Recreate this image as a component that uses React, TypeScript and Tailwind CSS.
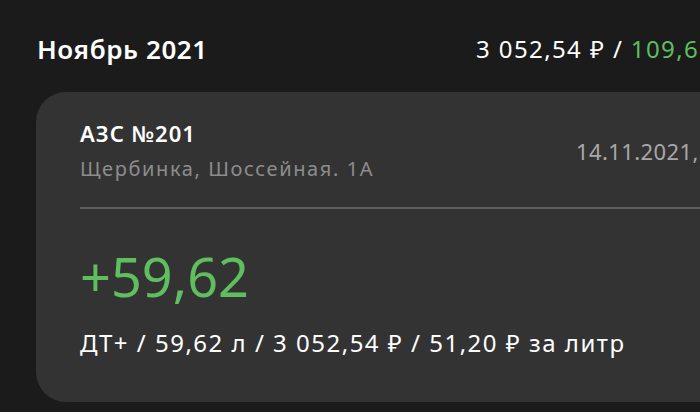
export default function App() {
  return (
    <div
      className="h-[412px] w-[700px] overflow-hidden bg-[#1b1b1b] text-white"
      style={{ fontFamily: '"Noto Sans", "DejaVu Sans", sans-serif' }}
    >
      <div className="flex items-center pl-[37px] pt-[33px]">
        <div className="w-[439px] shrink-0 text-[26px] font-semibold leading-[32px] tracking-[0.6px]">
          Ноябрь 2021
        </div>
        <div className="whitespace-nowrap text-[24px] leading-[32px] tracking-[1.4px]">
          3 052,54 ₽ / <span className="text-[#5fbf5f]">109,62 л</span>
        </div>
      </div>

      <div className="ml-[36px] mt-[27px] h-[310px] w-[720px] shrink-0 rounded-[30px] bg-[#333333] pl-[44px] pt-[26px]">
        <div className="flex items-center">
          <div className="w-[496px] shrink-0">
            <div className="text-[22px] font-semibold leading-[30px] tracking-[1px]">АЗС №201</div>
            <div className="mt-[7px] text-[20px] leading-[28px] tracking-[1.6px] text-[#8d8d8d]">
              Щербинка, Шоссейная. 1А
            </div>
          </div>
          <div className="whitespace-nowrap text-[22px] leading-[30px] tracking-[0.4px] text-[#a8a8a8]">
            14.11.2021, 12:34
          </div>
        </div>

        <div className="mt-[24px] h-[2px] bg-[#5e5e5e]" />

        <div className="mt-[36px] text-[54px] leading-[62px] text-[#5fbf5f]">+59,62</div>
        <div className="mt-[20px] whitespace-nowrap text-[24px] leading-[32px] tracking-[1.5px]">
          ДТ+ / 59,62 л / 3 052,54 ₽ / 51,20 ₽ за литр
        </div>
      </div>
    </div>
  );
}
